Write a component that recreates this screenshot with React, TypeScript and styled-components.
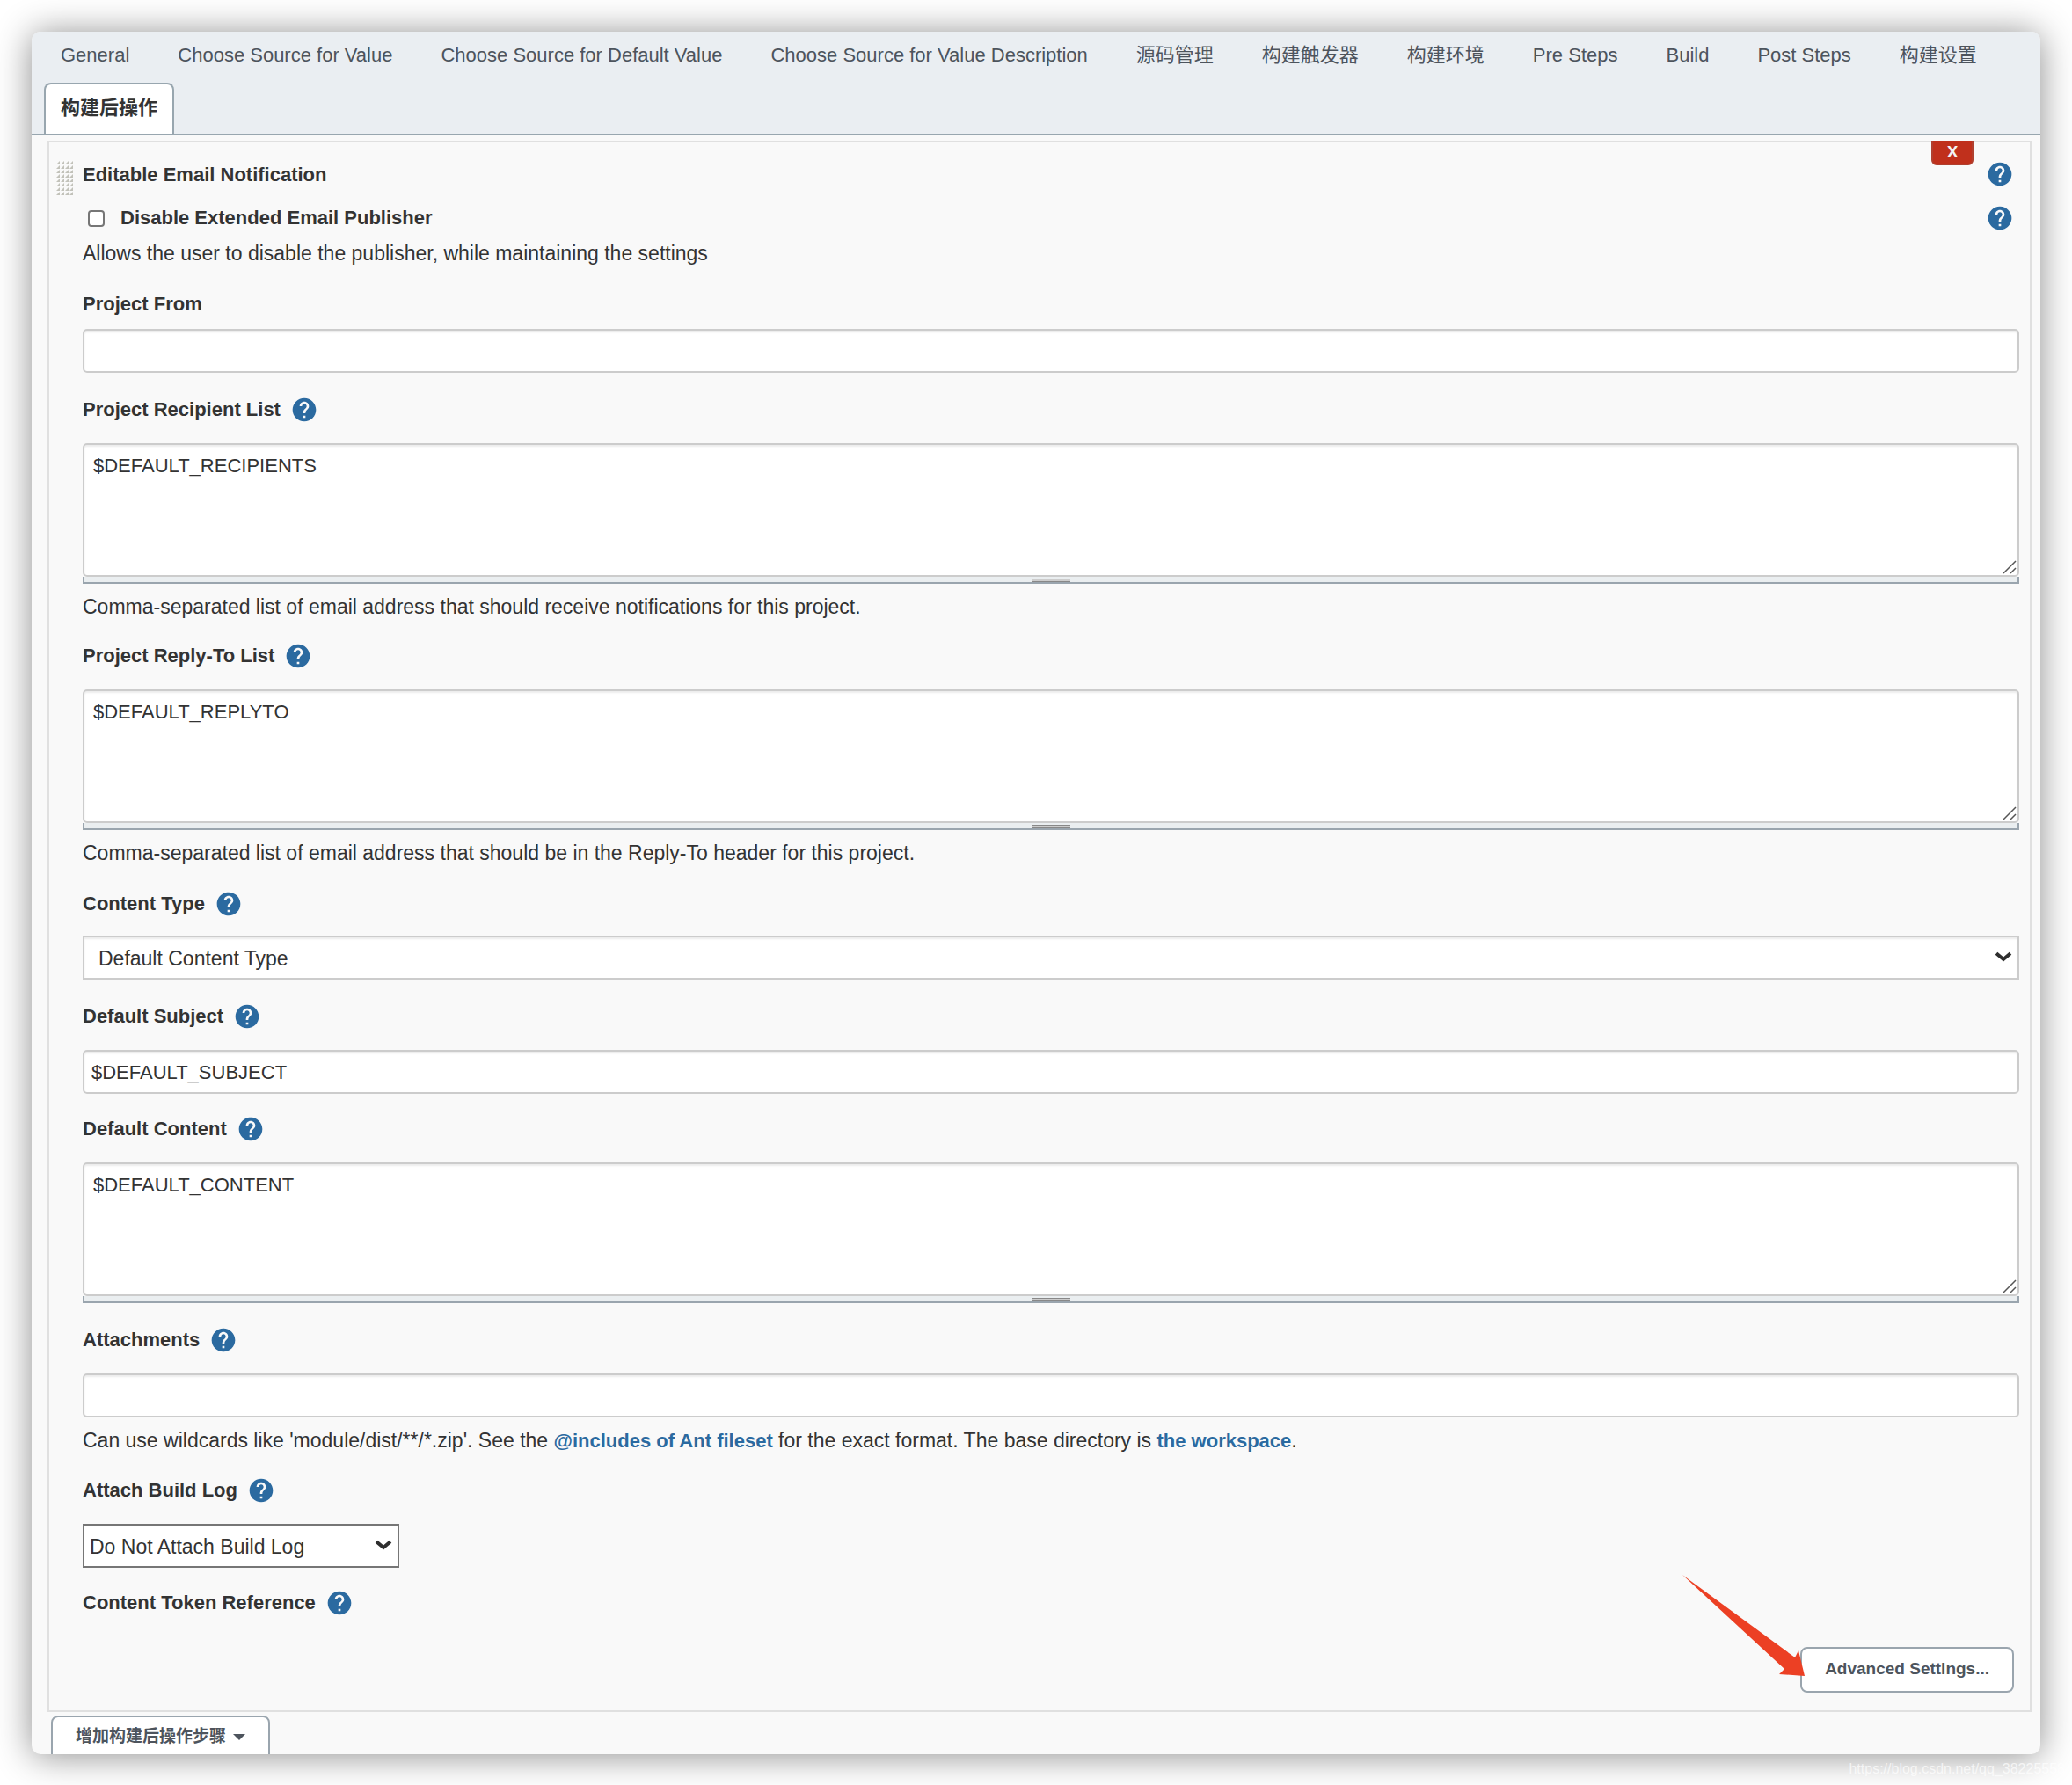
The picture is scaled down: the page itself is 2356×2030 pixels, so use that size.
import React, { useId } from "react";
import styled, { createGlobalStyle } from "styled-components";
import { MdHelp } from "react-icons/md";

const GlobalStyle = createGlobalStyle`
  *, *::before, *::after { box-sizing: border-box; }
  body {
    margin: 0;
    background: #fff;
    color: #333;
    font: 22px/28px "Liberation Sans", "Noto Sans CJK SC", sans-serif;
  }
  button, input, select, textarea { font: inherit; color: inherit; margin: 0; }
`;

const Page = styled.div`
  position: relative;
  padding: 36px;
  overflow: hidden;
`;

const Panel = styled.main`
  border-radius: 10px;
  overflow: hidden;
  background: #f9f9f9;
  box-shadow: 0 2px 40px rgba(0, 0, 0, 0.45);
`;

const TabBar = styled.nav`
  display: flex;
  flex-wrap: wrap;
  column-gap: 17px;
  padding: 0 14px;
  background: #eaeef2;
  border-bottom: 2px solid #98a6af;
`;

const Tab = styled.a<{ $active?: boolean }>`
  height: 58px;
  padding: ${(p) => (p.$active ? 13 : 11)}px 17px 0;
  border: 2px solid ${(p) => (p.$active ? "#98a6af" : "transparent")};
  border-bottom: 0;
  border-radius: 8px 8px 0 0;
  background: ${(p) => (p.$active ? "#fff" : "transparent")};
  color: ${(p) => (p.$active ? "#333" : "#4d545d")};
  font-weight: ${(p) => (p.$active ? 700 : 400)};
  text-decoration: none;
  white-space: nowrap;
`;

const Section = styled.section`
  position: relative;
  margin: 6px 10px 4px 18px;
  padding: 22px 12px 20px 38px;
  border: 2px solid #e0e0e0;
`;

const DragHandle = styled.svg`
  position: absolute;
  left: 7px;
  top: 20px;
`;

const DeleteButton = styled.button`
  position: absolute;
  top: -2px;
  right: 64px;
  width: 48px;
  height: 28px;
  padding: 0;
  border: 2px solid #b0402f;
  border-top: 0;
  border-radius: 0 0 6px 6px;
  background: #c0301c;
  color: #f4f4f4;
  font-size: 19px;
  line-height: 26px;
  font-weight: 700;
`;

const Row = styled.div<{ $after: number }>`
  display: flex;
  align-items: center;
  height: 28px;
  margin-bottom: ${(p) => p.$after}px;
`;

const Title = styled.h2`
  margin: 0 auto 0 0;
  padding-top: 2px;
  font-size: 22px;
  font-weight: 700;
`;

const CheckLabel = styled.label`
  display: flex;
  align-items: center;
  gap: 18px;
  margin-right: auto;
  padding-left: 6px;
  font-weight: 700;
`;

const CheckBox = styled.input`
  appearance: none;
  width: 19px;
  height: 19px;
  border: 2px solid #767676;
  border-radius: 4px;
  background: #fff;
`;

const Help = styled.button<{ $edge?: boolean }>`
  display: flex;
  margin-right: ${(p) => (p.$edge ? 6 : 0)}px;
  padding: 0;
  border: 0;
  background: none;
  color: #2b6aa0;
  font-size: 32px;
`;

const Field = styled.div<{ $after: number }>`
  margin-bottom: ${(p) => p.$after}px;
`;

const LabelRow = styled(Row)`
  gap: 11px;
  font-weight: 700;
`;

const Note = styled.p<{ $after?: number }>`
  margin: 12px 0 ${(p) => p.$after ?? 0}px;
  font-size: 23px;
`;

const Link = styled.a`
  color: #2b6aa0;
  font-size: 22px;
  font-weight: 700;
  text-decoration: none;
`;

const TextInput = styled.input`
  display: block;
  width: 100%;
  height: 50px;
  padding: 2px 8px 0;
  border: 2px solid #ccc;
  border-radius: 5px;
  background: #fff;
  box-shadow: inset 0 2px 2px rgba(0, 0, 0, 0.075);
`;

const Overlay = styled.div<{ $inline?: boolean }>`
  display: ${(p) => (p.$inline ? "inline-grid" : "grid")};
  vertical-align: top;
  width: ${(p) => (p.$inline ? "360px" : "auto")};
  > * { grid-area: 1 / 1; }
`;

const TextArea = styled.textarea`
  width: 100%;
  height: 152px;
  padding: 10px 10px;
  border: 2px solid #ccc;
  border-radius: 5px;
  background: #fff;
  box-shadow: inset 0 2px 2px rgba(0, 0, 0, 0.075);
  resize: none;
`;

const CornerGrip = styled.svg`
  place-self: end;
  margin: 3px;
  pointer-events: none;
`;

const ResizeBar = styled.div`
  display: flex;
  justify-content: center;
  align-items: flex-end;
  height: 8px;
  border: 2px solid #9aa5ae;
  border-top: 0;
  background: #eaeef0;
`;

const ResizeKnob = styled.span`
  width: 44px;
  height: 4px;
  border: solid #888;
  border-width: 1px 0;
  background: #ccc;
`;

const Select = styled.select<{ $plain?: boolean }>`
  appearance: none;
  width: 100%;
  height: 50px;
  padding: 2px ${(p) => (p.$plain ? 6 : 16)}px 0;
  border: 2px solid ${(p) => (p.$plain ? "#767676" : "#ccc")};
  border-radius: 0;
  background: #fff;
  box-shadow: ${(p) => (p.$plain ? "none" : "inset 0 2px 2px rgba(0, 0, 0, 0.075)")};
  font-size: 23px;
`;

const Chevron = styled.svg`
  place-self: center end;
  margin: 0 8px 2px 0;
  pointer-events: none;
`;

const Actions = styled.div`
  display: flex;
  justify-content: flex-end;
  padding-right: 6px;
`;

const ButtonAnchor = styled.div`
  position: relative;
`;

const AdvancedButton = styled.button`
  height: 52px;
  padding: 0 26px 2px;
  border: 2px solid #9aa5ae;
  border-radius: 8px;
  background: #fff;
  color: #4d545d;
  font-size: 19px;
  font-weight: 700;
`;

const Arrow = styled.svg`
  position: absolute;
  right: 100%;
  bottom: 100%;
  overflow: visible;
  pointer-events: none;
`;

const Footer = styled.footer`
  height: 44px;
  padding-left: 22px;
  overflow: hidden;
`;

const AddStepButton = styled.button`
  display: flex;
  align-items: center;
  gap: 8px;
  height: 52px;
  padding: 0 26px 4px;
  border: 2px solid #9aa5ae;
  border-radius: 8px;
  background: #fff;
  color: #4d545d;
  font-size: 19px;
  font-weight: 700;
`;

const Watermark = styled.span`
  position: absolute;
  right: 8px;
  bottom: 5px;
  color: rgba(255, 255, 255, 0.7);
  font-size: 16px;
`;

const tabs = [
  "General",
  "Choose Source for Value",
  "Choose Source for Default Value",
  "Choose Source for Value Description",
  "源码管理",
  "构建触发器",
  "构建环境",
  "Pre Steps",
  "Build",
  "Post Steps",
  "构建设置",
];

function HelpButton({ topic, edge }: { topic: string; edge?: boolean }) {
  return (
    <Help type="button" aria-label={`Help for ${topic}`} $edge={edge}>
      <MdHelp />
    </Help>
  );
}

function Down() {
  return (
    <Chevron width="20" height="12" viewBox="0 0 20 12" aria-hidden>
      <path d="M2 2.2 10 9 18 2.2" fill="none" stroke="#2e2e2e" strokeWidth="4" />
    </Chevron>
  );
}

type FieldProps = {
  label: string;
  help?: boolean;
  labelGap?: number;
  after?: number;
  note?: React.ReactNode;
  children: (id: string) => React.ReactNode;
};

function FormField({ label, help = true, labelGap = 24, after = 28, note, children }: FieldProps) {
  const id = useId();
  return (
    <Field $after={after}>
      <LabelRow $after={labelGap}>
        <label htmlFor={id}>{label}</label>
        {help && <HelpButton topic={label} />}
      </LabelRow>
      {children(id)}
      {note && <Note>{note}</Note>}
    </Field>
  );
}

function ResizableText({ id, value }: { id: string; value: string }) {
  return (
    <>
      <Overlay>
        <TextArea id={id} defaultValue={value} />
        <CornerGrip width="16" height="16" viewBox="0 0 16 16" aria-hidden>
          <path d="M1 15 15 1M9 15 15 9" stroke="#555" strokeWidth="1.5" />
        </CornerGrip>
      </Overlay>
      <ResizeBar>
        <ResizeKnob />
      </ResizeBar>
    </>
  );
}

export default function App() {
  return (
    <Page>
      <GlobalStyle />
      <Panel>
        <TabBar>
          {tabs.map((t) => (
            <Tab key={t} href="#">{t}</Tab>
          ))}
          <Tab href="#" $active>构建后操作</Tab>
        </TabBar>

        <Section>
          <DragHandle width="20" height="40" aria-hidden>
            <defs>
              <pattern id="dots" width="5" height="5" patternUnits="userSpaceOnUse">
                <path d="M1 5 5 1V5z" fill="#c2c2ba" />
              </pattern>
            </defs>
            <rect width="20" height="40" fill="url(#dots)" />
          </DragHandle>
          <DeleteButton type="button">X</DeleteButton>

          <Row $after={22}>
            <Title>Editable Email Notification</Title>
            <HelpButton topic="Editable Email Notification" edge />
          </Row>
          <Row $after={12}>
            <CheckLabel>
              <CheckBox type="checkbox" />
              Disable Extended Email Publisher
            </CheckLabel>
            <HelpButton topic="Disable Extended Email Publisher" edge />
          </Row>
          <Note $after={30}>Allows the user to disable the publisher, while maintaining the settings</Note>

          <FormField label="Project From" help={false} labelGap={14}>
            {(id) => <TextInput id={id} />}
          </FormField>
          <FormField
            label="Project Recipient List"
            note="Comma-separated list of email address that should receive notifications for this project."
          >
            {(id) => <ResizableText id={id} value="$DEFAULT_RECIPIENTS" />}
          </FormField>
          <FormField
            label="Project Reply-To List"
            after={30}
            note="Comma-separated list of email address that should be in the Reply-To header for this project."
          >
            {(id) => <ResizableText id={id} value="$DEFAULT_REPLYTO" />}
          </FormField>
          <FormField label="Content Type" labelGap={22}>
            {(id) => (
              <Overlay>
                <Select id={id}>
                  <option>Default Content Type</option>
                </Select>
                <Down />
              </Overlay>
            )}
          </FormField>
          <FormField label="Default Subject" after={26}>
            {(id) => <TextInput id={id} defaultValue="$DEFAULT_SUBJECT" />}
          </FormField>
          <FormField label="Default Content">
            {(id) => <ResizableText id={id} value="$DEFAULT_CONTENT" />}
          </FormField>
          <FormField
            label="Attachments"
            note={
              <>
                Can use wildcards like 'module/dist/**/*.zip'. See the <Link href="#">@includes of Ant fileset</Link>{" "}
                for the exact format. The base directory is <Link href="#">the workspace</Link>.
              </>
            }
          >
            {(id) => <TextInput id={id} />}
          </FormField>
          <FormField label="Attach Build Log" after={26}>
            {(id) => (
              <Overlay $inline>
                <Select id={id} $plain>
                  <option>Do Not Attach Build Log</option>
                </Select>
                <Down />
              </Overlay>
            )}
          </FormField>
          <LabelRow $after={36}>
            <span>Content Token Reference</span>
            <HelpButton topic="Content Token Reference" />
          </LabelRow>
          <Actions>
            <ButtonAnchor>
              <AdvancedButton type="button">Advanced Settings...</AdvancedButton>
              <Arrow width="134" height="82" viewBox="0 0 134 82" aria-hidden>
                <path d="M0 0 128 94 132 86 139 115 110 113 116 107Z" fill="#ec4024" />
              </Arrow>
            </ButtonAnchor>
          </Actions>
        </Section>

        <Footer>
          <AddStepButton type="button">
            增加构建后操作步骤
            <svg width="14" height="7" viewBox="0 0 14 7" aria-hidden>
              <path d="M0 0h14L7 7z" fill="#4d545d" />
            </svg>
          </AddStepButton>
        </Footer>
      </Panel>
      <Watermark>https://blog.csdn.net/qq_38225558</Watermark>
    </Page>
  );
}
